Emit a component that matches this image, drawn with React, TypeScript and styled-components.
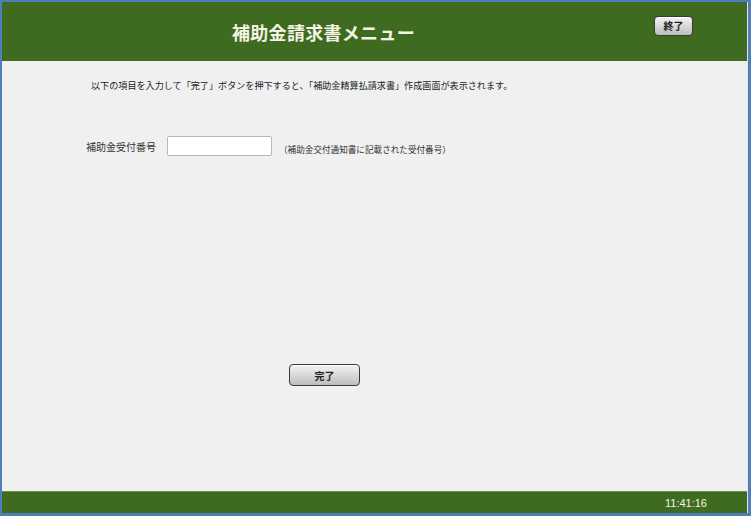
import React from "react";
import styled, { createGlobalStyle } from "styled-components";

const GlobalStyle = createGlobalStyle`
  html, body {
    margin: 0;
    padding: 0;
    height: 100%;
  }
  #root {
    height: 100%;
  }
  body {
    font-family: "Liberation Sans", "Noto Sans CJK JP", sans-serif;
  }
`;

const Frame = styled.div`
  box-sizing: border-box;
  height: 100vh;
  background: #4f7fbb;
  padding: 2px 3px 3px 2px;
`;

const Window = styled.div`
  height: 100%;
  display: flex;
  flex-direction: column;
  background: #f0f0f0;
  border-right: 1px solid #dfe8f2;
`;

const Header = styled.header`
  height: 59px;
  flex-shrink: 0;
  background: #3e6b1f;
  display: flex;
  align-items: center;
  padding-right: 54px;
`;

const Title = styled.h1`
  flex: 1;
  margin: 0;
  padding-right: 9px;
  text-align: center;
  font-family: "Noto Sans CJK JP", sans-serif;
  font-size: 18px;
  font-weight: 700;
  color: #f3f3e6;
  letter-spacing: 0.3px;
`;

const GrayButton = styled.button<{ $w: number; $h: number }>`
  width: ${({ $w }) => $w}px;
  height: ${({ $h }) => $h}px;
  padding: 0;
  border: 1px solid #3a3a3a;
  border-radius: 4px;
  background: linear-gradient(#f4f4f4, #d6d6d6 55%, #bdbdbd);
  box-shadow: inset 0 1px 0 #ffffff;
  font-family: "Noto Sans CJK JP", sans-serif;
  font-size: 10px;
  font-weight: 700;
  color: #222;
  cursor: pointer;
`;

const CloseButton = styled(GrayButton)`
  margin-top: -12px;
`;

const Main = styled.main`
  flex: 1;
  display: flex;
  flex-direction: column;
  align-items: flex-start;
`;

const Intro = styled.p`
  margin: 18px 0 0 89px;
  font-family: "Noto Sans CJK JP", sans-serif;
  font-size: 9.1px;
  line-height: 12px;
  color: #222;
`;

const FormRow = styled.div`
  margin: 45px 0 0 84px;
  display: flex;
  align-items: center;
`;

const Label = styled.label`
  width: 81px;
  font-family: "Noto Sans CJK JP", sans-serif;
  font-size: 10px;
  color: #333;
`;

const TextInput = styled.input`
  box-sizing: border-box;
  width: 105px;
  height: 20px;
  border: 1px solid #b8b8b8;
  border-radius: 2px;
  background: #fff;
  padding: 0 3px;
  font-size: 11px;
  outline: none;
`;

const Hint = styled.span`
  margin: 5px 0 0 7px;
  font-family: "Noto Sans CJK JP", sans-serif;
  font-size: 8.6px;
  color: #333;
`;

const SubmitRow = styled.div`
  margin: 208px 0 0 287px;
`;

const Footer = styled.footer`
  height: 21px;
  flex-shrink: 0;
  background: #3e6b1f;
  border-top: 1px solid #6f9150;
  display: flex;
  align-items: center;
  justify-content: flex-end;
  padding-right: 40px;
  font-family: "Liberation Sans", sans-serif;
  font-size: 11px;
  color: #f2f5ea;
`;

export default function App() {
  return (
    <>
      <GlobalStyle />
      <Frame>
        <Window>
          <Header>
            <Title>補助金請求書メニュー</Title>
            <CloseButton $w={39} $h={20}>終了</CloseButton>
          </Header>
          <Main>
            <Intro>
              以下の項目を入力して「完了」ボタンを押下すると、「補助金精算払請求書」作成画面が表示されます。
            </Intro>
            <FormRow>
              <Label htmlFor="uketsuke">補助金受付番号</Label>
              <TextInput id="uketsuke" type="text" />
              <Hint>（補助金交付通知書に記載された受付番号）</Hint>
            </FormRow>
            <SubmitRow>
              <GrayButton $w={71} $h={22}>完了</GrayButton>
            </SubmitRow>
          </Main>
          <Footer>11:41:16</Footer>
        </Window>
      </Frame>
    </>
  );
}
